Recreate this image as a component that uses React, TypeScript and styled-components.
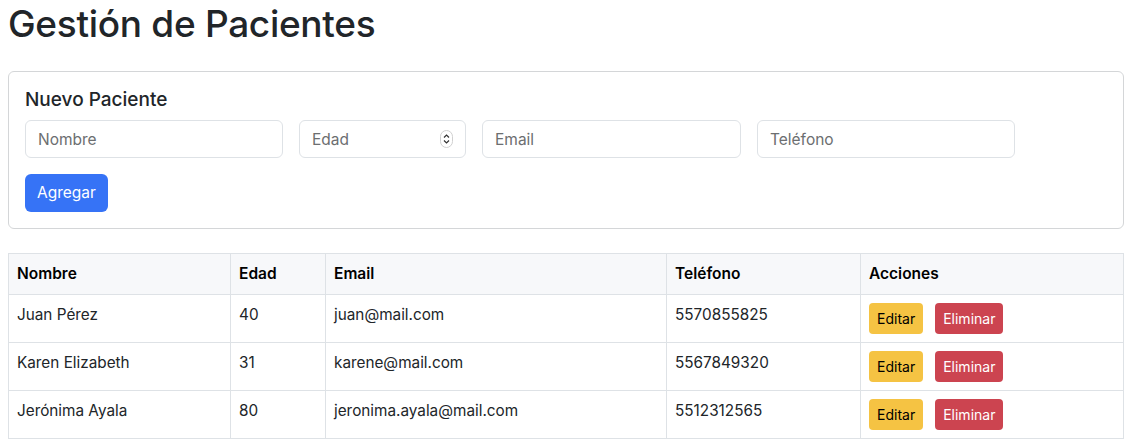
import React from "react";
import styled, { createGlobalStyle } from "styled-components";

const Global = createGlobalStyle`
  * { box-sizing: border-box; }
  body {
    margin: 0;
    font-family: Inter, "Noto Sans", "Liberation Sans", sans-serif;
    font-size: 16px;
    line-height: 1.5;
    color: #212529;
    background: #fff;
  }
`;

const Page = styled.div`
  padding: 0 10px 0 8px;
`;

const Title = styled.h1`
  margin: 0 0 24px;
  font-size: 37px;
  font-weight: 500;
  line-height: 47px;
  letter-spacing: -0.3px;
`;

const Card = styled.section`
  border: 1px solid #d4d6d8;
  border-radius: 6px;
  padding: 16px;
  margin-bottom: 24px;
`;

const CardTitle = styled.h5`
  margin: 0 0 8px;
  font-size: 19px;
  font-weight: 500;
  line-height: 24px;
`;

const FormGrid = styled.div`
  display: grid;
  grid-template-columns: 258px 167px 259px 258px;
  column-gap: 16px;
  row-gap: 16px;
`;

const Field = styled.div`
  position: relative;
`;

const Input = styled.input`
  display: block;
  width: 100%;
  height: 38px;
  padding: 6px 12px;
  font-family: inherit;
  font-size: 15.5px;
  color: #212529;
  border: 1px solid #dee2e6;
  border-radius: 6px;
  outline: none;
  &::placeholder { color: #6c6e70; }
`;

const Spinner = styled.svg`
  position: absolute;
  right: 13px;
  top: 10px;
  width: 13px;
  height: 18px;
  pointer-events: none;
`;

const ButtonCell = styled.div`
  grid-column: 1 / -1;
`;

const Btn = styled.button<{ $variant: "primary" | "warning" | "danger"; $small?: boolean }>`
  font-family: inherit;
  border: none;
  cursor: pointer;
  font-size: ${(p) => (p.$small ? "14px" : "15.5px")};
  line-height: ${(p) => (p.$small ? "21px" : "24px")};
  padding: ${(p) => (p.$small ? "5px 8px" : "7px 12px")};
  border-radius: ${(p) => (p.$small ? "4px" : "6px")};
  background: ${(p) =>
    p.$variant === "primary" ? "#3673f6" : p.$variant === "warning" ? "#f5c343" : "#cc4450"};
  color: ${(p) => (p.$variant === "warning" ? "#000" : "#fff")};
`;

const Table = styled.table`
  width: 100%;
  border-collapse: collapse;
  table-layout: fixed;
  border: 1px solid #dee2e6;
`;

const HeadCell = styled.th`
  text-align: left;
  font-weight: 600;
  font-size: 15.5px;
  color: #000;
  background: #f7f8fa;
  padding: 8px;
  line-height: 24px;
  border: 1px solid #dee2e6;
`;

const Cell = styled.td`
  vertical-align: top;
  padding: 8px;
  font-size: 15.3px;
  line-height: 24px;
  border: 1px solid #dee2e6;
  height: 48px;
`;

const Actions = styled.div`
  display: flex;
  gap: 12px;
`;

const patients = [
  { name: "Juan Pérez", age: 40, email: "juan@mail.com", phone: "5570855825" },
  { name: "Karen Elizabeth", age: 31, email: "karene@mail.com", phone: "5567849320" },
  { name: "Jerónima Ayala", age: 80, email: "jeronima.ayala@mail.com", phone: "5512312565" },
];

export default function App() {
  return (
    <Page>
      <Global />
      <Title>Gestión de Pacientes</Title>
      <Card>
        <CardTitle>Nuevo Paciente</CardTitle>
        <FormGrid>
          <Input placeholder="Nombre" />
          <Field>
            <Input placeholder="Edad" />
            <Spinner viewBox="0 0 13 18">
              <rect x="0.5" y="0.5" width="12" height="17" rx="6" fill="#fff" stroke="#d0d0d0" />
              <path d="M4 7.5 L6.5 5 L9 7.5" fill="none" stroke="#333" strokeWidth="1.2" />
              <path d="M4 10.5 L6.5 13 L9 10.5" fill="none" stroke="#333" strokeWidth="1.2" />
            </Spinner>
          </Field>
          <Input placeholder="Email" />
          <Input placeholder="Teléfono" />
          <ButtonCell>
            <Btn $variant="primary">Agregar</Btn>
          </ButtonCell>
        </FormGrid>
      </Card>
      <Table>
        <colgroup>
          <col style={{ width: 222 }} />
          <col style={{ width: 95 }} />
          <col style={{ width: 341 }} />
          <col style={{ width: 194 }} />
          <col />
        </colgroup>
        <thead>
          <tr>
            <HeadCell>Nombre</HeadCell>
            <HeadCell>Edad</HeadCell>
            <HeadCell>Email</HeadCell>
            <HeadCell>Teléfono</HeadCell>
            <HeadCell>Acciones</HeadCell>
          </tr>
        </thead>
        <tbody>
          {patients.map((p) => (
            <tr key={p.phone}>
              <Cell>{p.name}</Cell>
              <Cell>{p.age}</Cell>
              <Cell>{p.email}</Cell>
              <Cell>{p.phone}</Cell>
              <Cell>
                <Actions>
                  <Btn $variant="warning" $small>Editar</Btn>
                  <Btn $variant="danger" $small>Eliminar</Btn>
                </Actions>
              </Cell>
            </tr>
          ))}
        </tbody>
      </Table>
    </Page>
  );
}
